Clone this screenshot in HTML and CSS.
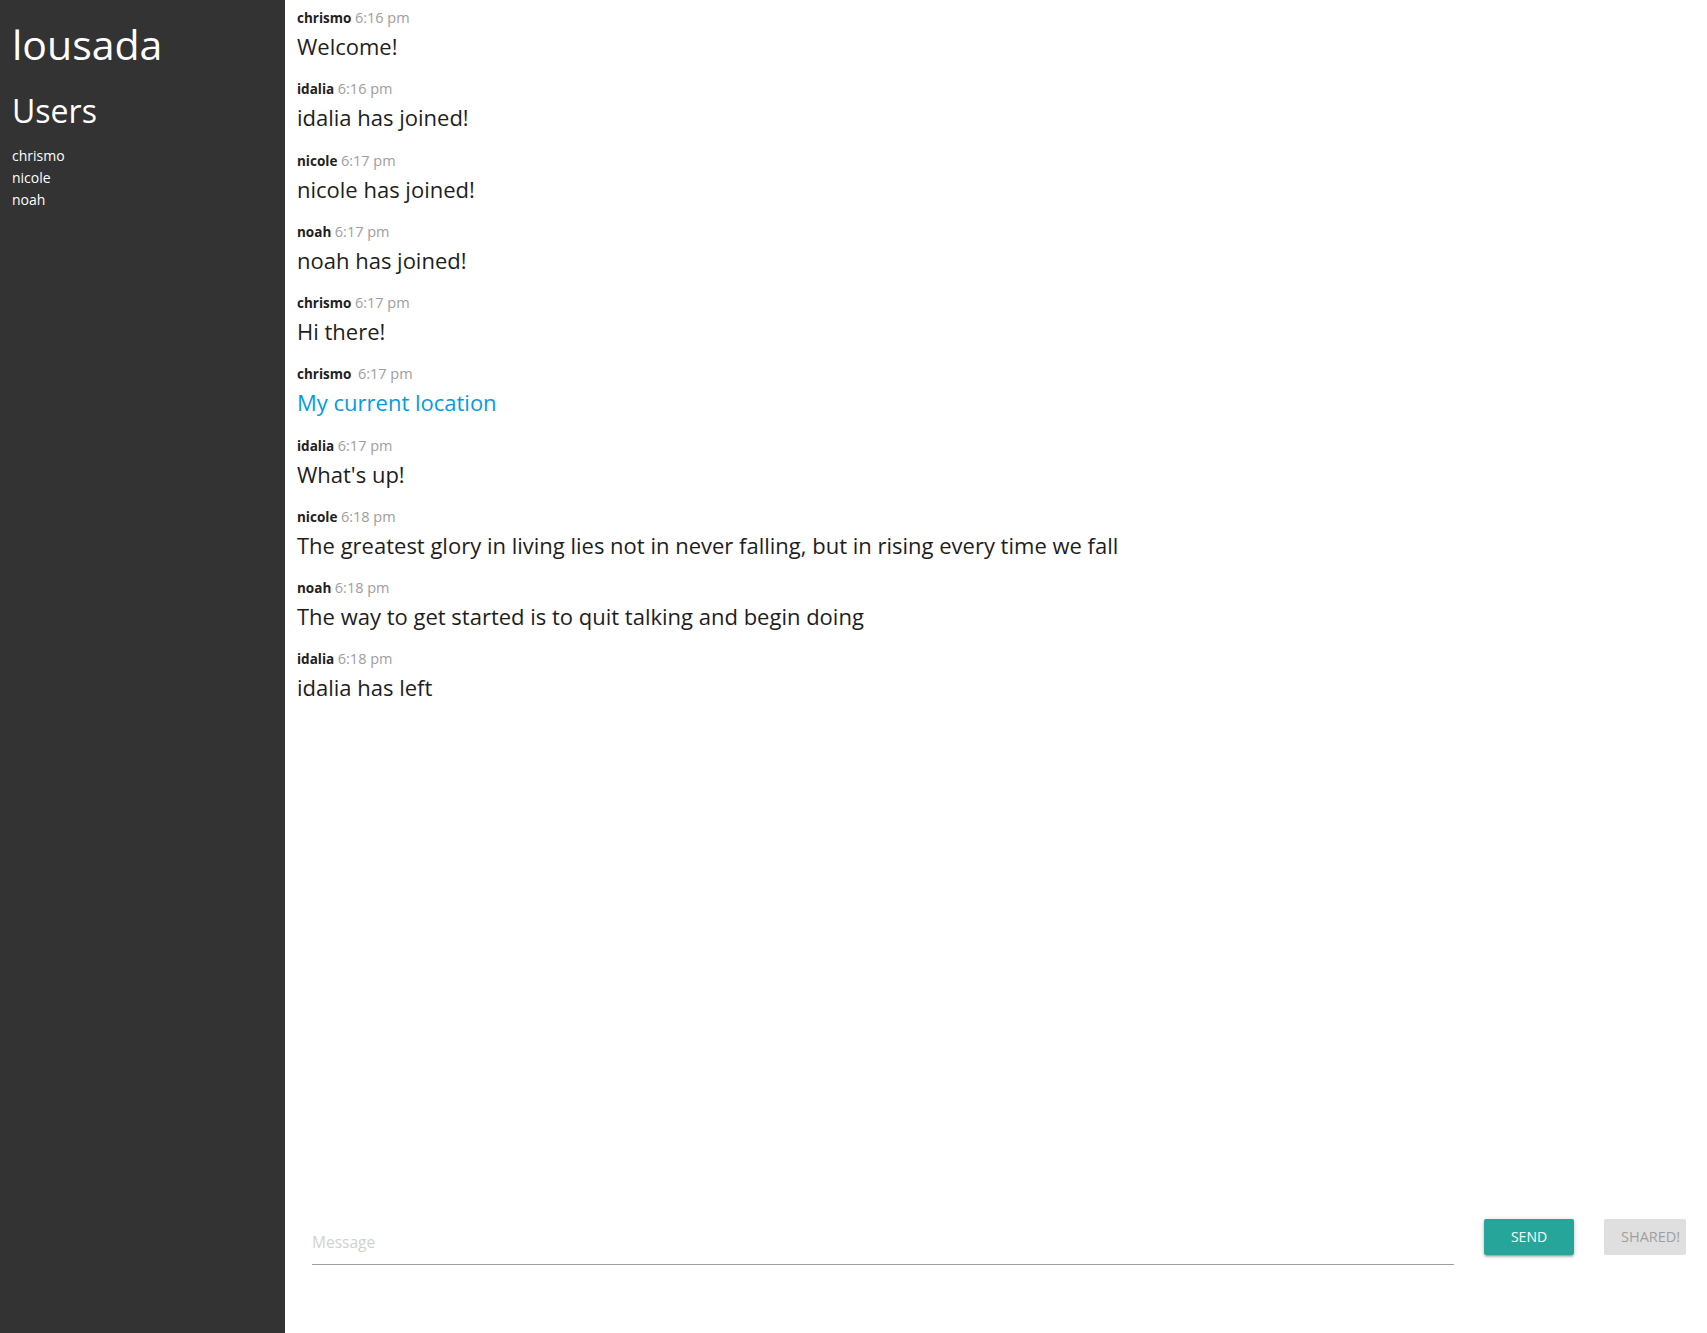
FILE: index.html
```html
<!DOCTYPE html>
<html lang="en">
<head>
<meta charset="utf-8">
<title>lousada | Chat</title>
<link rel="stylesheet" href="styles.css">
</head>
<body>
<div class="app">
  <aside class="sidebar">
    <h1 class="sidebar-title">lousada</h1>
    <h2 class="sidebar-heading">Users</h2>
    <ul class="user-list">
      <li>chrismo</li>
      <li>nicole</li>
      <li>noah</li>
    </ul>
  </aside>
  <main class="chat">
    <div class="messages">
      <div class="message">
        <p class="meta"><span class="name">chrismo</span> <span class="time">6:16 pm</span></p>
        <p class="body">Welcome!</p>
      </div>
      <div class="message">
        <p class="meta"><span class="name">idalia</span> <span class="time">6:16 pm</span></p>
        <p class="body">idalia has joined!</p>
      </div>
      <div class="message">
        <p class="meta"><span class="name">nicole</span> <span class="time">6:17 pm</span></p>
        <p class="body">nicole has joined!</p>
      </div>
      <div class="message">
        <p class="meta"><span class="name">noah</span> <span class="time">6:17 pm</span></p>
        <p class="body">noah has joined!</p>
      </div>
      <div class="message">
        <p class="meta"><span class="name">chrismo</span> <span class="time">6:17 pm</span></p>
        <p class="body">Hi there!</p>
      </div>
      <div class="message">
        <p class="meta"><span class="name">chrismo</span> <span class="time time-wide">6:17 pm</span></p>
        <p class="body"><a class="location-link" href="#">My current location</a></p>
      </div>
      <div class="message">
        <p class="meta"><span class="name">idalia</span> <span class="time">6:17 pm</span></p>
        <p class="body">What's up!</p>
      </div>
      <div class="message">
        <p class="meta"><span class="name">nicole</span> <span class="time">6:18 pm</span></p>
        <p class="body">The greatest glory in living lies not in never falling, but in rising every time we fall</p>
      </div>
      <div class="message">
        <p class="meta"><span class="name">noah</span> <span class="time">6:18 pm</span></p>
        <p class="body">The way to get started is to quit talking and begin doing</p>
      </div>
      <div class="message">
        <p class="meta"><span class="name">idalia</span> <span class="time">6:18 pm</span></p>
        <p class="body">idalia has left</p>
      </div>
    </div>
    <form class="compose">
      <input class="compose-input" type="text" name="message" placeholder="Message" autocomplete="off">
      <button class="btn btn-send" type="button">Send</button>
      <button class="btn btn-shared" type="button" disabled>Shared!</button>
    </form>
  </main>
</div>
</body>
</html>
```

FILE: styles.css
```css
* {
  box-sizing: border-box;
}

html, body {
  margin: 0;
  padding: 0;
  height: 100%;
}

body {
  font-family: "Open Sans", "Noto Sans", "DejaVu Sans", sans-serif;
  color: #212121;
  background: #ffffff;
  overflow: hidden;
}

.app {
  display: flex;
  height: 100vh;
}

/* Sidebar */
.sidebar {
  flex: 0 0 285px;
  background: #333333;
  color: #ffffff;
  padding: 0 12px;
}

.sidebar-title {
  margin: 19px 0 0;
  font-size: 41px;
  font-weight: 400;
  line-height: 50px;
}

.sidebar-heading {
  margin: 22px 0 0;
  font-size: 32px;
  font-weight: 400;
  line-height: 40px;
}

.user-list {
  list-style: none;
  margin: 14px 0 0;
  padding: 0;
  font-size: 14px;
  line-height: 22px;
}

/* Chat */
.chat {
  flex: 1 1 auto;
  display: flex;
  flex-direction: column;
  min-width: 0;
}

.messages {
  flex: 1 1 auto;
  overflow: hidden;
  padding: 8px 12px 0;
}

.message {
  margin-bottom: 18.25px;
}

.meta {
  margin: 0;
  font-size: 13.5px;
  line-height: 20px;
}

.name {
  font-weight: 700;
  color: #212121;
}

.time {
  font-size: 14.5px;
  color: #9e9e9e;
}

.time-wide {
  margin-left: 3px;
}

.body {
  margin: 3px 0 0;
  font-size: 22px;
  line-height: 30px;
  color: #1e1e1e;
}

.location-link {
  color: #039be5;
  text-decoration: none;
}

/* Compose */
.compose {
  flex: 0 0 auto;
  display: flex;
  align-items: flex-start;
  padding: 0 21px 68px 27px;
}

.compose-input {
  flex: 1 1 auto;
  min-width: 0;
  height: 49px;
  border: none;
  border-bottom: 1px solid #9e9e9e;
  outline: none;
  background: transparent;
  padding: 3px 0 0;
  font-family: inherit;
  font-size: 15.5px;
  color: #212121;
}

.compose-input::placeholder {
  color: #d1d1d1;
}

.btn {
  flex: 0 0 auto;
  height: 36px;
  margin-top: 3px;
  margin-left: 30px;
  border: none;
  border-radius: 2px;
  font-family: inherit;
  font-size: 14px;
  line-height: 36px;
  text-transform: uppercase;
  white-space: nowrap;
  overflow: hidden;
}

.btn-send {
  width: 90px;
  padding: 0;
  text-align: center;
  background: #26a69a;
  color: #ffffff;
  box-shadow: 0 2px 2px 0 rgba(0, 0, 0, 0.14), 0 3px 1px -2px rgba(0, 0, 0, 0.12), 0 1px 5px 0 rgba(0, 0, 0, 0.2);
}

.btn-shared {
  width: 82px;
  padding: 0 0 0 17px;
  text-align: left;
  font-size: 14.5px;
  background: #dfdfdf;
  color: #9f9f9f;
}
```
